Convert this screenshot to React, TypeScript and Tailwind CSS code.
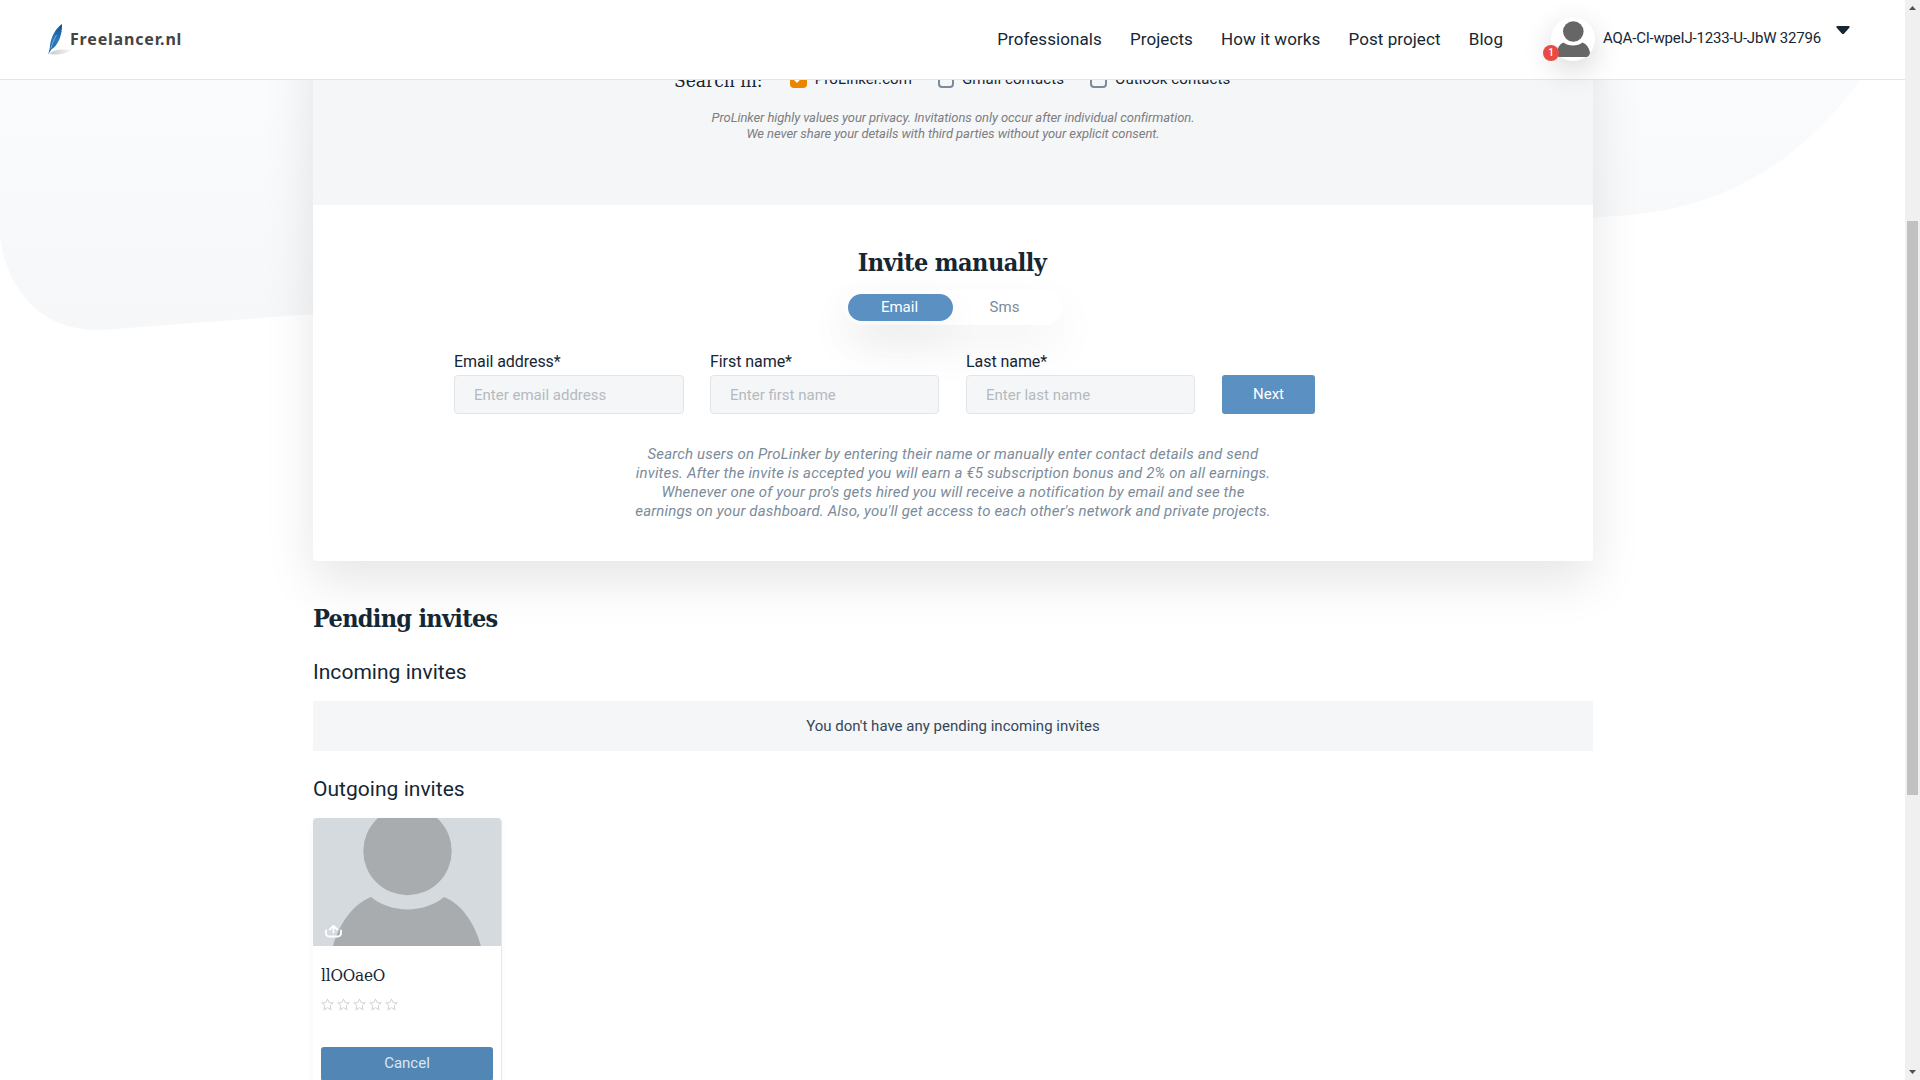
const slab = 'font-["DejaVu_Serif_Condensed","DejaVu_Serif",serif] [font-stretch:condensed]';

function Feather() {
  return (
    <svg className="h-[34px] w-[26px] shrink-0" viewBox="0 0 26 34" fill="none">
      <defs>
        <linearGradient id="quill" x1="14" y1="0" x2="3" y2="28" gradientUnits="userSpaceOnUse">
          <stop offset="0" stopColor="#0a4f8f" />
          <stop offset="0.6" stopColor="#2e79bd" />
          <stop offset="1" stopColor="#1f64a6" />
        </linearGradient>
        <linearGradient id="shade" x1="3" y1="30" x2="24" y2="27" gradientUnits="userSpaceOnUse">
          <stop offset="0" stopColor="#c9c9c9" />
          <stop offset="1" stopColor="#f6f6f6" />
        </linearGradient>
      </defs>
      <path d="M2.500 31C6 27 12 25.500 24 27C20 30.500 10 32.500 2.500 31Z" fill="url(#shade)" />
      <path d="M15 1C9 5 3.200 14 2.800 25L1.200 31.500L4.300 26.500C11 22.500 15.500 12 15 1Z" fill="url(#quill)" />
      <path d="M9.500 12C6.800 16.500 5 21 4 25.500" stroke="#9cc3e6" strokeWidth="0.7" />
    </svg>
  );
}

function Header() {
  return (
    <header className="relative z-10 flex h-20 shrink-0 items-start border-b border-[#e2e5e8] bg-white">
      <div className="ml-[47px] mt-[23px] flex items-start">
        <Feather />
        <span className="-ml-[3px] mt-[5px] font-['Noto_Sans',sans-serif] text-[16px] font-bold leading-[22px] tracking-[0.82px] text-[#444]">
          Freelancer.nl
        </span>
      </div>
      <nav className="ml-auto mr-[48px] mt-[29px] flex gap-[28.2px] text-[17px] leading-5 tracking-[0.07px]">
        <a>Professionals</a>
        <a>Projects</a>
        <a>How it works</a>
        <a>Post project</a>
        <a>Blog</a>
      </nav>
      <div className="relative mt-[17px] size-11 rounded-full bg-white shadow-[0_10px_30px_rgba(0,0,0,0.16)]">
        <svg className="size-11" viewBox="0 0 44 44" fill="#666">
          <circle cx="22.300" cy="14.500" r="10.300" />
          <path d="M12.500 25.500C17 29.500 27 29.500 31.500 25.500C35.500 27 38.500 31 39 36C38.500 38 37.500 39 36 40H8C6.500 39.300 6 38.500 5.800 36C6.500 31 8.500 27 12.500 25.500Z" />
        </svg>
        <span className="absolute -left-2 top-7 flex size-4 items-center justify-center rounded-full bg-[#e94b43] text-[10px] font-medium leading-none text-white">
          1
        </span>
      </div>
      <span className="ml-2 mt-[28px] w-[218px] whitespace-nowrap text-[15px] leading-5 tracking-[-0.2px]">
        AQA-CI-wpeIJ-1233-U-JbW 32796
      </span>
      <svg className="ml-[15px] mr-[55px] mt-[26px] h-[9px] w-[14px]" viewBox="0 0 14 9" fill="#152634">
        <path d="M1 0H13Q14.200 .6 13.300 1.700L8.200 7.500Q7 8.700 5.800 7.500L.7 1.700Q-.2 .6 1 0Z" />
      </svg>
    </header>
  );
}

function Backdrop() {
  return (
    <svg className="absolute left-0 top-0 h-[340px] w-[1905px]" viewBox="0 0 1905 340">
      <defs>
        <linearGradient id="blob" x1="0" y1="80" x2="0" y2="330" gradientUnits="userSpaceOnUse">
          <stop offset="0" stopColor="#fafbfc" />
          <stop offset="1" stopColor="#f6f7f9" />
        </linearGradient>
      </defs>
      <path
        d="M0 0V238C8 292 42 330 97 330C101 330 104 330 108 329.500L1593 217.500C1615 216 1632 215 1651 212.500C1738 200 1810 151 1860 80V0Z"
        fill="url(#blob)"
      />
    </svg>
  );
}

function Choice({ label, checked, className }: { label: string; checked?: boolean; className: string }) {
  return (
    <label className={`flex items-center ${className}`}>
      {checked ? (
        <span className="flex size-[17px] items-center justify-center rounded bg-[#ea8500]">
          <svg className="size-3" viewBox="0 0 12 12" fill="none" stroke="#fff" strokeWidth="2">
            <path d="M2 5.500L5 8.500L10 3" />
          </svg>
        </span>
      ) : (
        <span className="size-[17px] rounded border-2 border-[#7b8b9a]" />
      )}
      <span className="ml-2 whitespace-nowrap text-[15px] leading-5 tracking-[0.09px]">{label}</span>
    </label>
  );
}

function Field({ label, placeholder, className }: { label: string; placeholder: string; className: string }) {
  return (
    <div className={`w-[256px] ${className}`}>
      <div className="mb-[3px] text-[16px] leading-5 tracking-[-0.06px]">{label}</div>
      <input
        className="block h-[39px] w-full rounded border border-[#dfe5ea] bg-[#f5f6f8] pl-[19px] pt-px text-[15px] outline-none placeholder:text-[#b3bac1] placeholder:opacity-100"
        placeholder={placeholder}
      />
    </div>
  );
}

function InviteCard() {
  return (
    <section className="relative -mt-[180px] h-[661px] w-[1280px] shrink-0 rounded bg-white shadow-[0_20px_50px_rgba(0,0,0,0.1)]">
      <div className="flex h-[305px] flex-col justify-end bg-[#f5f6f8] pb-[63px]">
        <div className="flex h-[26px] items-center pl-[361px]">
          <span className={`${slab} w-[88px] whitespace-nowrap pt-[2px] text-[19px] leading-[26px]`}>Search in:</span>
          <Choice className="ml-[28px] w-[122px]" label="ProLinker.com" checked />
          <Choice className="ml-[26px] w-[126px]" label="Gmail contacts" />
          <Choice className="ml-[26px]" label="Outlook contacts" />
        </div>
        <p className="mt-[18px] text-center text-[13px] italic leading-4 tracking-[-0.07px] text-[#7d7d7d]">
          ProLinker highly values your privacy. Invitations only occur after individual confirmation.
          <br />
          We never share your details with third parties without your explicit consent.
        </p>
      </div>
      <div className="flex flex-col items-center pt-[40px]">
        <h2 className={`${slab} mr-[2px] whitespace-nowrap text-[25px] font-bold leading-9 tracking-[-0.57px]`}>Invite manually</h2>
        <div className="mt-[9px] flex h-[35px] w-[218px] rounded-full bg-white p-1 text-[15px] leading-[26px] shadow-[0_20px_50px_rgba(0,0,0,0.06)]">
          <span className="w-[105px] rounded-full bg-[#5a90c2] pr-[2px] text-center text-white shadow-[0_15px_40px_rgba(0,0,0,0.06)]">Email</span>
          <span className="relative w-[105px] pr-[2px] text-center text-[#7b8b9a]">Sms</span>
        </div>
        <div className="relative mt-[27px] flex w-[1280px] items-end pl-[141px]">
          <Field className="pr-[26px]" label="Email address*" placeholder="Enter email address" />
          <Field className="pr-[27px]" label="First name*" placeholder="Enter first name" />
          <Field className="pr-[27px]" label="Last name*" placeholder="Enter last name" />
          <button className="h-[39px] w-[93px] rounded-[3px] bg-[#5a90c2] text-[15px] text-white">Next</button>
        </div>
        <p className="mt-[31px] whitespace-nowrap text-center text-[15px] italic leading-[19px] tracking-[0.165px] text-[#7b8b9a]">
          Search users on ProLinker by entering their name or manually enter contact details and send
          <br />
          invites. After the invite is accepted you will earn a €5 subscription bonus and 2% on all earnings.
          <br />
          Whenever one of your pro's gets hired you will receive a notification by email and see the
          <br />
          earnings on your dashboard. Also, you'll get access to each other's network and private projects.
        </p>
      </div>
    </section>
  );
}

function Star() {
  return (
    <svg className="size-[13px]" viewBox="0 0 13 13" fill="none" stroke="#cdd3d9" strokeWidth="1" strokeLinejoin="round">
      <path d="M6.500 .9L8.100 4.600L12.200 4.900L9.100 7.600L10.100 11.900L6.500 9.700L2.900 11.900L3.900 7.600L.8 4.900L4.900 4.600Z" />
    </svg>
  );
}

function ContactCard() {
  return (
    <div className="mt-[15px] h-[290px] w-[189px] overflow-hidden rounded border-r border-[#e4e7ea] bg-white shadow-[0_2px_10px_rgba(0,0,0,0.03)]">
      <svg className="block h-32 w-[188px] bg-[#d5dadf]" viewBox="0 0 188 128">
        <circle cx="94.500" cy="33" r="44.200" fill="#a9acae" />
        <path d="M20 128C26 106 40 86 58 79C78 95.500 111 95.500 131 79C149 86 162 106 168 128Z" fill="#a9acae" />
        <g fill="none" stroke="#fff" strokeWidth="1.800" strokeLinecap="round" strokeLinejoin="round">
          <path d="M13 112.500V115Q13 118.500 16.500 118.500H24.500Q28 118.500 28 115V112.500" />
          <path d="M20.500 114.500V108.500M16.700 111.500L20.500 107.800L24.300 111.500" />
        </g>
      </svg>
      <div className="px-2 pt-[17px]">
        <div className={`${slab} text-[17px] leading-6 tracking-[-0.2px]`}>llOOaeO</div>
        <div className="mt-[11px] flex gap-[3px]">
          <Star />
          <Star />
          <Star />
          <Star />
          <Star />
        </div>
        <button className="mt-[36px] block h-[34px] w-[172px] rounded-[3px] bg-[#5286b4] pb-[2px] text-[15px] leading-[30px] text-[#dce6ef]">
          Cancel
        </button>
      </div>
    </div>
  );
}

function Scrollbar() {
  return (
    <div className="flex w-[15px] shrink-0 flex-col items-center bg-[#f0f0f0]">
      <svg className="h-[221px] w-[15px] shrink-0" viewBox="0 0 15 221" fill="#505050">
        <path d="M4 10L7.500 6L11 10Z" />
      </svg>
      <div className="h-[574px] w-[11px] shrink-0 bg-[#c1c1c1]" />
      <svg className="mt-auto h-[15px] w-[15px] shrink-0" viewBox="0 0 15 15" fill="#505050">
        <path d="M4 5L7.500 9L11 5Z" />
      </svg>
    </div>
  );
}

export default function App() {
  return (
    <div className="flex h-[1080px] w-[1920px] overflow-hidden bg-white font-[Roboto,sans-serif] text-[#152634]">
      <div className="relative flex h-[1080px] w-[1905px] flex-col overflow-hidden">
        <Backdrop />
        <Header />
        <main className="flex flex-col pl-[313px]">
          <InviteCard />
          <div className="relative w-[1280px]">
            <h2 className={`${slab} mt-[40px] whitespace-nowrap text-[25px] font-bold leading-9 tracking-[-0.7px]`}>Pending invites</h2>
            <h3 className="mt-[21px] text-[21px] leading-7 tracking-[0.03px]">Incoming invites</h3>
            <div className="mt-[15px] h-[50px] bg-[#f5f6f8] text-center text-[15px] leading-[50px] text-[#34465a]">
              You don't have any pending incoming invites
            </div>
            <h3 className="mt-[24px] text-[21px] leading-7 tracking-[0.03px]">Outgoing invites</h3>
            <ContactCard />
          </div>
        </main>
      </div>
      <Scrollbar />
    </div>
  );
}
